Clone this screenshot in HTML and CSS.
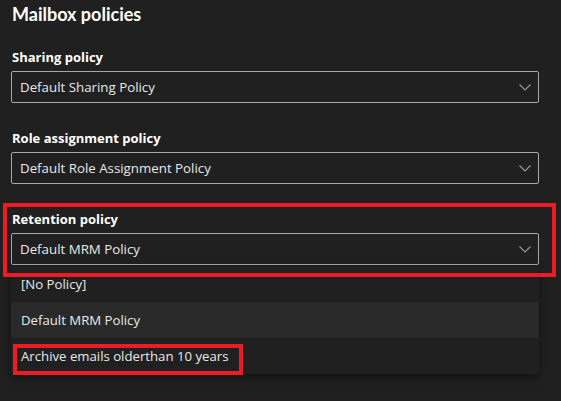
FILE: index.html
```html
<!DOCTYPE html>
<html lang="en">
<head>
<meta charset="utf-8">
<title>Mailbox policies</title>
<link rel="stylesheet" href="styles.css">
</head>
<body>
<div class="page">
  <h1 class="title">Mailbox policies</h1>

  <div class="field">
    <div class="label">Sharing policy</div>
    <div class="select">
      <span class="value">Default Sharing Policy</span>
      <svg class="chev" width="12" height="7" viewBox="0 0 12 7"><path d="M0.5 0.5 L6 6 L11.5 0.5" fill="none" stroke="#9a9a9a" stroke-width="1.1"/></svg>
    </div>
  </div>

  <div class="field">
    <div class="label">Role assignment policy</div>
    <div class="select">
      <span class="value">Default Role Assignment Policy</span>
      <svg class="chev" width="12" height="7" viewBox="0 0 12 7"><path d="M0.5 0.5 L6 6 L11.5 0.5" fill="none" stroke="#9a9a9a" stroke-width="1.1"/></svg>
    </div>
  </div>

  <div class="field">
    <div class="label">Retention policy</div>
    <div class="select">
      <span class="value">Default MRM Policy</span>
      <svg class="chev" width="12" height="7" viewBox="0 0 12 7"><path d="M0.5 0.5 L6 6 L11.5 0.5" fill="none" stroke="#9a9a9a" stroke-width="1.1"/></svg>
    </div>
  </div>

  <ul class="menu">
    <li class="option">[No Policy]</li>
    <li class="option selected">Default MRM Policy</li>
    <li class="option">Archive emails olderthan 10 years</li>
  </ul>

  <div class="mark mark-field"></div>
  <div class="mark mark-option"></div>
</div>
</body>
</html>
```

FILE: styles.css
```css
html, body {
  margin: 0;
  padding: 0;
  background: #202020;
}

body {
  font-family: "Open Sans", "Noto Sans", "Liberation Sans", sans-serif;
  color: #f2f2f2;
}

.page {
  position: relative;
  width: 528px;
  height: 401px;
  padding: 0 22px 0 11px;
  overflow: hidden;
}

.title {
  margin: 0;
  padding-left: 1px;
  font-family: Lato, "Open Sans", sans-serif;
  font-size: 18px;
  line-height: 29px;
  font-weight: 700;
  color: #ffffff;
}

.field {
  margin-top: 18px;
  display: flex;
  flex-direction: column;
  gap: 4px;
}

.field + .field {
  margin-top: 25px;
}

.label {
  font-size: 13px;
  line-height: 20px;
  font-weight: 700;
  color: #ffffff;
  padding-left: 1px;
}

.select {
  box-sizing: border-box;
  height: 32px;
  border: 1px solid #a8a8a8;
  border-radius: 2px;
  display: flex;
  align-items: center;
  justify-content: space-between;
  padding: 0 7px 0 8px;
  font-size: 13.3px;
  color: #e8e8e8;
}

.chev {
  display: block;
}

.menu {
  position: absolute;
  left: 11px;
  top: 266px;
  width: 528px;
  margin: 0;
  padding: 0;
  list-style: none;
  background: #202020;
  box-shadow: 0 4px 10px rgba(0, 0, 0, 0.45);
  border-radius: 0 0 2px 2px;
}

.option {
  height: 36px;
  display: flex;
  align-items: center;
  padding-left: 10px;
  font-size: 13.2px;
  color: #e8e8e8;
}

.option.selected {
  background: #2a2a2a;
}

.mark {
  position: absolute;
  box-sizing: border-box;
  border: 4px solid #ed1c24;
  pointer-events: none;
}

.mark-field {
  left: 3px;
  top: 203px;
  width: 553px;
  height: 74px;
}

.mark-option {
  left: 13px;
  top: 344px;
  width: 230px;
  height: 31px;
}
```
